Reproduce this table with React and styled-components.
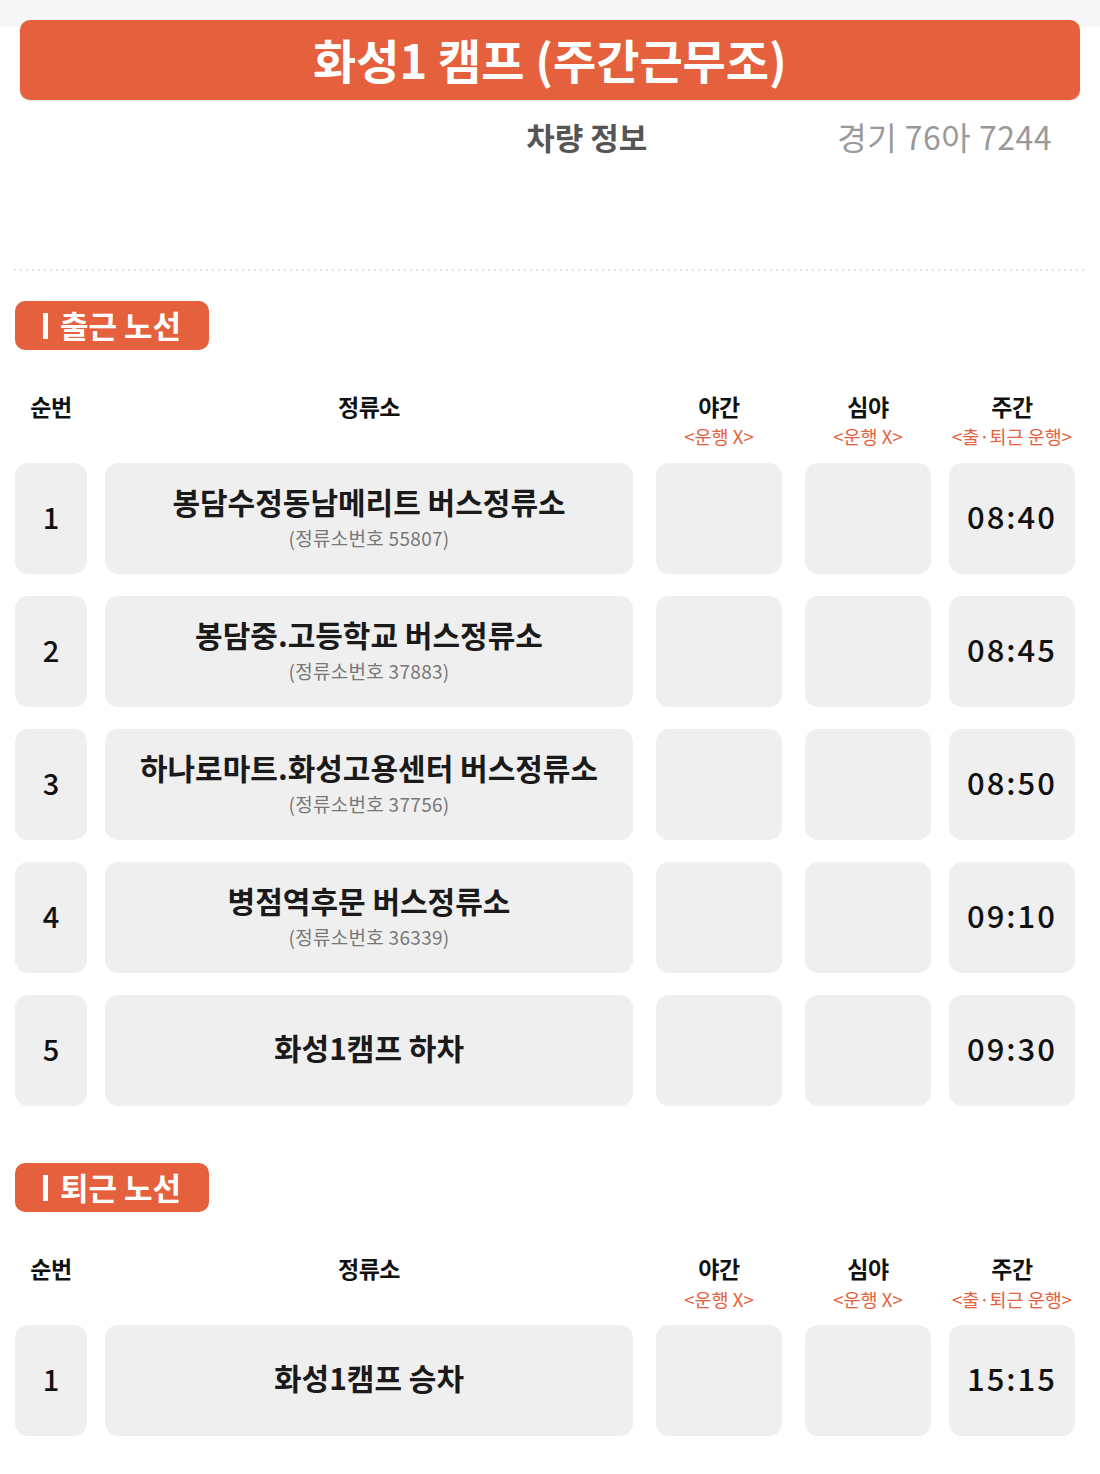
import React from "react";
import styled, { createGlobalStyle } from "styled-components";

const ORANGE = "#e5613e";

const GlobalStyle = createGlobalStyle`
  html, body {
    margin: 0;
    padding: 0;
    background: #fff;
  }
  body {
    font-family: "Noto Sans CJK KR", "Noto Sans", sans-serif;
    color: #111;
  }
`;

const Page = styled.div`
  width: 1100px;
  min-height: 1474px;
  background: linear-gradient(#f7f7f7 27px, #fff 27px);
  padding-top: 20px;
  box-sizing: border-box;
`;

const TitleBar = styled.div`
  margin: 0 20px;
  height: 80px;
  padding-bottom: 4px;
  box-sizing: border-box;
  background: ${ORANGE};
  border-radius: 10px;
  display: flex;
  align-items: center;
  justify-content: center;
  color: #fff;
  font-size: 47px;
  font-weight: 700;
  box-shadow: 0 1px 2px rgba(0, 0, 0, 0.12);
`;

const VehicleRow = styled.div`
  margin-top: 16px;
  height: 40px;
  display: flex;
  align-items: center;
  justify-content: flex-end;
  padding-right: 48px;
  gap: 190px;
`;

const VehicleLabel = styled.span`
  font-size: 31px;
  font-weight: 700;
  color: #555;
`;

const VehicleValue = styled.span`
  font-size: 32px;
  font-weight: 400;
  color: #999;
  letter-spacing: 0.5px;
`;

const Divider = styled.div`
  margin: 113px 15px 0 14px;
  height: 2px;
  background-image: linear-gradient(to right, #e3e3e3 2px, transparent 2px);
  background-size: 6px 2px;
`;

const Section = styled.section`
  padding: 0 25px 0 15px;
  margin-top: ${(p) => p.$top}px;
`;

const Tag = styled.div`
  display: flex;
  align-items: center;
  height: 49px;
  width: 194px;
  box-sizing: border-box;
  padding: 0 0 3px 28px;
  background: ${ORANGE};
  border-radius: 10px;
  color: #fff;
  font-size: 31px;
  font-weight: 700;
`;

const TagBar = styled.span`
  display: inline-block;
  width: 5px;
  height: 26px;
  margin: 4px 12px 0 0;
  background: #fff;
`;

const Grid = styled.div`
  display: grid;
  grid-template-columns: 72px 546px 149px 149px 144px;
  & > *:nth-child(5n + 2),
  & > *:nth-child(5n + 5) {
    margin-left: 18px;
  }
  & > *:nth-child(5n + 3),
  & > *:nth-child(5n + 4) {
    margin-left: 23px;
  }
`;

const HeadGrid = styled(Grid)`
  margin-top: 40px;
`;

const HeadCell = styled.div`
  display: flex;
  flex-direction: column;
  align-items: center;
`;

const HeadTitle = styled.div`
  font-size: 23px;
  font-weight: 700;
  line-height: 1.45;
  letter-spacing: -0.5px;
  color: #111;
`;

const HeadSub = styled.div`
  font-size: 18.5px;
  line-height: 1.45;
  color: ${ORANGE};
`;

const Rows = styled.div`
  margin-top: ${(p) => p.$top}px;
  display: flex;
  flex-direction: column;
  gap: 22px;
`;

const Cell = styled.div`
  height: 111px;
  box-sizing: border-box;
  padding-bottom: 6px;
  background: #efefef;
  border-radius: 13px;
  display: flex;
  flex-direction: column;
  align-items: center;
  justify-content: center;
`;

const NumCell = styled(Cell)`
  font-size: 29px;
  font-weight: 500;
  color: #111;
`;

const StopName = styled.div`
  font-size: 30px;
  font-weight: 700;
  color: #1a1a1a;
  line-height: 1.45;
`;

const StopNo = styled.div`
  font-size: 19px;
  color: #777;
  letter-spacing: 0.3px;
  line-height: 1.45;
`;

const TimeCell = styled(Cell)`
  font-size: 31px;
  font-weight: 500;
  letter-spacing: 2px;
  color: #111;
`;

const heads = [
  { title: "순번" },
  { title: "정류소" },
  { title: "야간", sub: "<운행 X>" },
  { title: "심야", sub: "<운행 X>" },
  { title: "주간", sub: "<출·퇴근 운행>" },
];

const morning = [
  { name: "봉담수정동남메리트 버스정류소", no: "55807", time: "08:40" },
  { name: "봉담중.고등학교 버스정류소", no: "37883", time: "08:45" },
  { name: "하나로마트.화성고용센터 버스정류소", no: "37756", time: "08:50" },
  { name: "병점역후문 버스정류소", no: "36339", time: "09:10" },
  { name: "화성1캠프 하차", time: "09:30" },
];

const evening = [{ name: "화성1캠프 승차", time: "15:15" }];

const Header = () => (
  <HeadGrid>
    {heads.map((h) => (
      <HeadCell key={h.title}>
        <HeadTitle>{h.title}</HeadTitle>
        {h.sub && <HeadSub>{h.sub}</HeadSub>}
      </HeadCell>
    ))}
  </HeadGrid>
);

const RouteRows = ({ rows, top }) => (
  <Rows $top={top}>
    {rows.map((r, i) => (
      <Grid key={r.name}>
        <NumCell>{i + 1}</NumCell>
        <Cell>
          <StopName>{r.name}</StopName>
          {r.no && <StopNo>(정류소번호 {r.no})</StopNo>}
        </Cell>
        <Cell />
        <Cell />
        <TimeCell>{r.time}</TimeCell>
      </Grid>
    ))}
  </Rows>
);

export default function App() {
  return (
    <>
      <GlobalStyle />
      <Page>
        <TitleBar>화성1 캠프 (주간근무조)</TitleBar>
        <VehicleRow>
          <VehicleLabel>차량 정보</VehicleLabel>
          <VehicleValue>경기 76아 7244</VehicleValue>
        </VehicleRow>
        <Divider />
        <Section $top={30}>
          <Tag>
            <TagBar />
            출근 노선
          </Tag>
          <Header />
          <RouteRows rows={morning} top={13} />
        </Section>
        <Section $top={57}>
          <Tag>
            <TagBar />
            퇴근 노선
          </Tag>
          <Header />
          <RouteRows rows={evening} top={13} />
        </Section>
      </Page>
    </>
  );
}
